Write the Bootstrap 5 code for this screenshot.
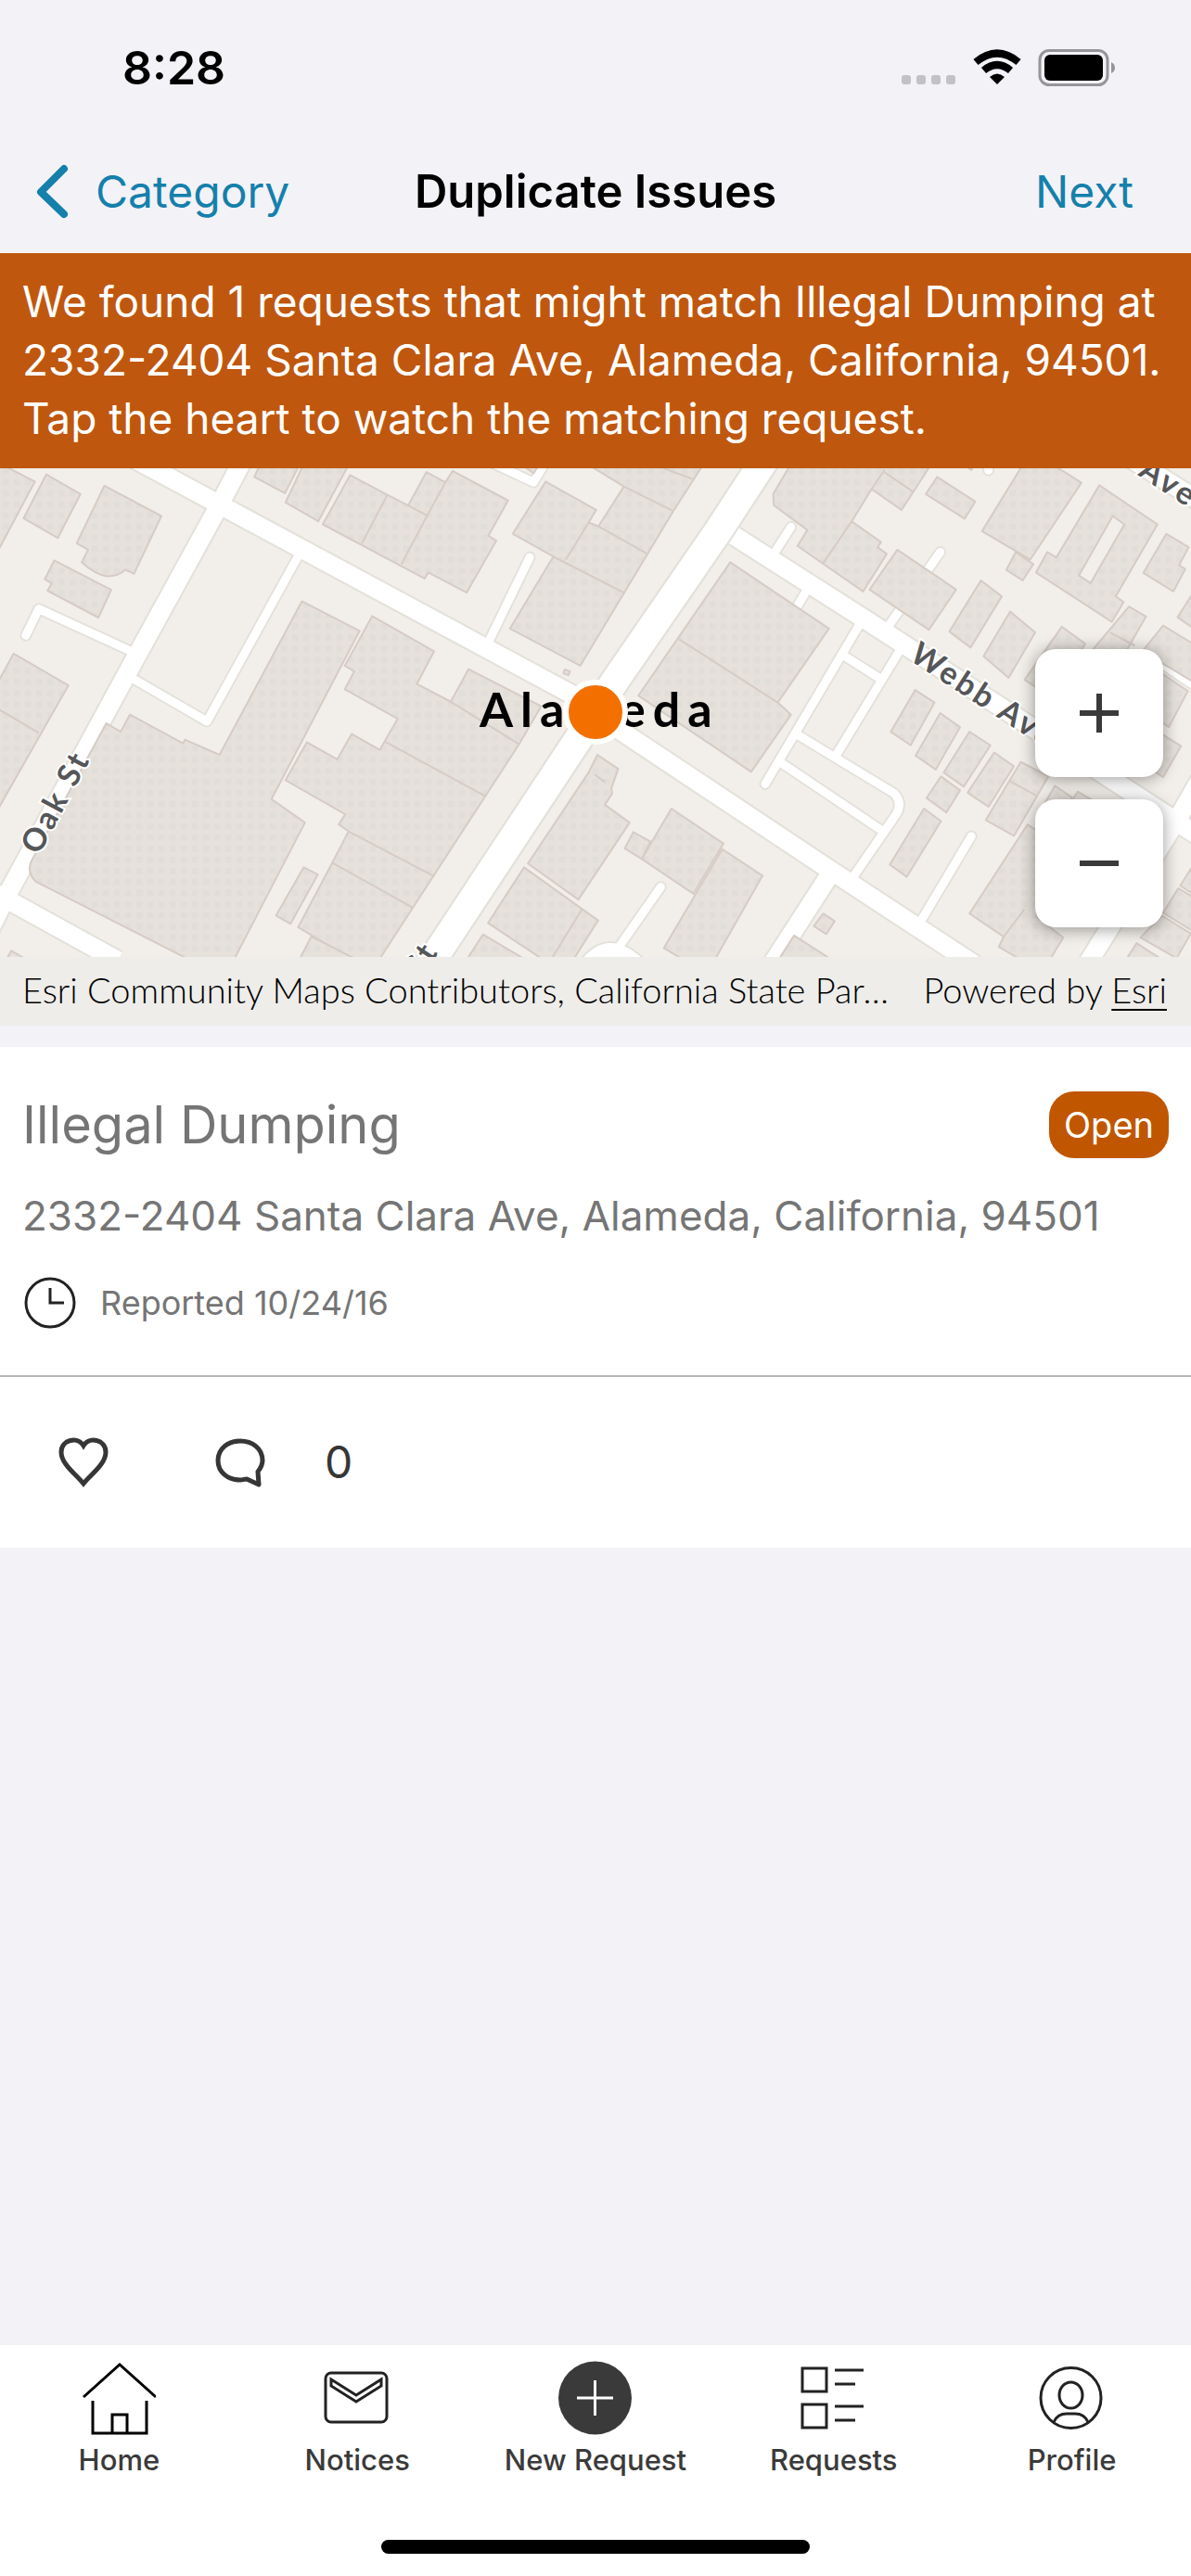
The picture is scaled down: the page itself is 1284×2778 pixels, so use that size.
<!DOCTYPE html>
<html lang="en">
<head>
<meta charset="utf-8">
<meta name="viewport" content="width=device-width, initial-scale=1">
<title>Duplicate Issues</title>
<link href="https://cdn.jsdelivr.net/npm/bootstrap@5.3.0/dist/css/bootstrap.min.css" rel="stylesheet">
<style>
  body { background: #f3f2f7; font-family: Inter, "Liberation Sans", sans-serif; color: #000; }
  svg { display: block; flex: none; }
  a { text-decoration: none; }

  .status-bar { height: 141px; padding: 4px 82px 0 132px; }
  .clock-time { font-size: 50px; line-height: 60px; font-weight: 600; }

  .nav-top { height: 132px; font-size: 48px; line-height: 60px; }
  .nav-top a { color: #1480ab; }
  .nav-top h1 { font-size: 49px; line-height: 60px; font-weight: 600; }
  .nav-side { flex: 1 1 0; }
  .nav-back { padding: 0 24px 0 38px; gap: 25px; }
  .nav-next { padding-right: 62px; }

  .notice { background: #c0570e; color: #fff; font-size: 46px; line-height: 63px; padding: 21px 20px 22px 24px; }

  .map-box { background: #f2efea; }
  .map-art { width: 100%; height: 601px; }
  .land-build { fill: url(#dots); stroke: #d6ccc5; stroke-width: 5; stroke-linejoin: round; }
  .land-line { fill: none; stroke: #d6ccc5; stroke-width: 5; }
  .casing { stroke: #e3e1da; }
  .lane { stroke: #fff; }
  .map-label { font-family: Lato, "Liberation Sans", sans-serif; font-weight: 700; paint-order: stroke; }
  .zoom-stack { right: 30px; top: 195px; gap: 24px; }
  .zoom-btn { width: 138px; height: 138px; border: 0; border-radius: 22px; background: #fff; box-shadow: 0 2px 18px rgba(0, 0, 0, .4); }
  .map-credit { height: 74px; padding: 0 26px 4px 24px; background: #eeedea; font-family: Lato, "Liberation Sans", sans-serif; font-size: 38px; font-weight: 300; line-height: 44px; }
  .map-credit a { color: #000; text-decoration: underline; text-underline-offset: 6px; text-decoration-thickness: 2px; }

  .issue { margin-top: 23px; background: #fff; color: #757575; }
  .issue-main { padding: 48px 24px 50px 24px; border-bottom: 2px solid #b6b6b6; }
  .issue h2 { font-size: 56px; line-height: 72px; font-weight: 400; }
  .state-pill { background: #c05600; color: #fff; font-size: 38px; line-height: 72px; border-radius: 27px; padding: 0 16px; }
  .issue-place { font-size: 44px; line-height: 56px; margin-top: 34px; }
  .issue-date { font-size: 36px; line-height: 56px; margin-top: 38px; gap: 26px; }
  .issue-tools { height: 184px; padding: 0 62px; color: #363636; font-size: 48px; gap: 114px; }
  .tool-btn { border: 0; background: none; padding: 0; color: inherit; gap: 64px; }

  .tabs-bottom { background: #fff; padding: 17px 0 24px; }
  .tabs-bottom a { color: #3a3a3a; font-size: 31px; line-height: 36px; font-weight: 500; gap: 9px; }
  .home-bar { width: 36%; height: 15px; border-radius: 8px; background: #000; margin-top: 68px; }
</style>
<script src="https://cdn.jsdelivr.net/npm/bootstrap@5.3.0/dist/js/bootstrap.bundle.min.js" defer></script>
</head>
<body class="d-flex flex-column min-vh-100">

<header>
  <div class="status-bar d-flex align-items-center justify-content-between">
    <span class="clock-time">8:28</span>
    <svg width="230" height="40" viewBox="0 0 230 40" aria-hidden="true">
      <g fill="#c2c1c6"><rect x="0" y="28" width="10" height="10" rx="3"/><rect x="16" y="28" width="10" height="10" rx="3"/><rect x="32" y="28" width="10" height="10" rx="3"/><rect x="48" y="28" width="10" height="10" rx="3"/></g>
      <g fill="none" stroke="#000" stroke-width="8"><path d="M80 14 Q103 -5 126 14"/><path d="M88.500 23 Q103 11 117.500 23"/></g>
      <path d="M103 38 L95 30 Q103 23 111 30 Z"/>
      <rect x="149" y="1.500" width="73" height="37" rx="10" fill="none" stroke="#96959a" stroke-width="3"/>
      <rect x="154" y="6" width="63" height="28" rx="6"/>
      <path d="M226 14 Q230 16 230 20 Q230 24 226 26 Z" fill="#96959a"/>
    </svg>
  </div>
  <nav class="nav-top d-flex align-items-center" aria-label="Page">
    <a href="#" class="nav-side nav-back d-flex align-items-center">
      <svg width="40" height="60" viewBox="0 0 40 60" fill="none" stroke="#1480ab" stroke-width="8" stroke-linecap="round" stroke-linejoin="round" aria-hidden="true"><path d="M31 5 L6 30 L31 54"/></svg>
      <span>Category</span>
    </a>
    <h1 class="m-0">Duplicate Issues</h1>
    <a href="#" class="nav-side nav-next text-end">Next</a>
  </nav>
</header>

<main class="flex-grow-1">
  <p class="notice m-0">We found 1 requests that might match Illegal Dumping at 2332-2404 Santa Clara Ave, Alameda, California, 94501. Tap the heart to watch the matching request.</p>

  <section class="map-box position-relative overflow-hidden" aria-label="Map">
    <svg class="map-art position-absolute top-0 start-0" viewBox="0 0 1284 601" preserveAspectRatio="xMidYMid slice" aria-hidden="true">
      <defs>
        <pattern id="dots" width="29.300" height="29.300" patternUnits="userSpaceOnUse">
          <rect width="30" height="30" fill="#e6e1db"/><rect x="7" y="7" width="16" height="16" rx="3" fill="#e1ddd8"/>
        </pattern>
        <g id="big-roads" fill="none" stroke-linejoin="round">
          <path d="M350 10 L1540 652 L1620 720 L2168 1085 L2568 1348"/>
          <path d="M645 5 L573 143 L350 550 L20 1160 L-40 1280"/>
          <path d="M-40 1143 L10 1170 L310 1336"/>
          <path d="M1933 215 L2258 423 L2728 727 L3160 1010"/>
          <path d="M2188 1105 L2030 1350"/>
          <path d="M2860 1350 L3108 950 L3160 860"/>
          <path d="M2960 0 L3180 138"/>
        </g>
        <path id="main-road" fill="none" d="M1120 1363 L1525 748 L1618 600 L1893 200 L2030 -10"/>
        <g id="lanes" fill="none" stroke-linecap="round" stroke-linejoin="round">
          <path d="M790 260 L545 705 L350 592"/>
          <path d="M68 478 L102 408 L350 522"/>
          <path d="M1395 272 L1284 500"/>
          <path d="M1290 20 L1405 74 L1440 15"/>
          <path d="M2083 192 L2030 275"/><path d="M2476 258 L2335 460"/><path d="M2130 350 L2100 400"/><path d="M2603 20 L2603 42"/>
          <path d="M2263 450 L2015 870"/><path d="M2220 530 L2318 592"/><path d="M2380 500 L2203 792"/>
          <path d="M2100 740 L2355 895 Q2378 920 2360 950 L2240 1125"/>
          <path d="M2058 815 L2318 990"/><path d="M2558 1008 L2420 1240"/><path d="M1740 1142 L1630 1300"/>
          <path d="M3040 540 L3160 620"/>
        </g>
      </defs>
      <g transform="scale(.4094 .4087) translate(0 -37)">
        <use href="#lanes" class="casing" stroke-width="31"/>
        <use href="#big-roads" class="casing" stroke-width="58"/>
        <use href="#main-road" class="casing" stroke-width="84"/>
        <path d="M1520 1345 Q1600 1230 1710 1345" fill="#fff" stroke="#e3e1da" stroke-width="5"/>
        <use href="#lanes" class="lane" stroke-width="22"/>
        <use href="#big-roads" class="lane" stroke-width="48"/>
        <use href="#main-road" class="lane" stroke-width="73"/>
        <g class="land-build">
          <path d="M-10 20 L0 30 L20 35 L92 72 L0 245 L-10 255Z"/>
          <path d="M122 53 L212 105 L152 221 L62 169Z"/>
          <path d="M275 83 L425 163 L353 315 L330 305 Q312 322 282 322 Q250 318 215 285 L232 252 L202 235Z"/>
          <path d="M143 280 L293 358 L259 431 L125 360 L136 341 L118 330Z"/>
          <path d="M-10 610 L36 526 L180 610 L-10 945Z"/>
          <path d="M795 388 L947 466 L715 910 L803 972 L600 1365 L560 1365 L95 1128 Q70 1105 82 1075 L280 710 L318 732 L342 687 L482 763 L487 753 L578 793Z"/>
          <path d="M980 427 L1143 520 L1098 606 L1187 653 L1234 567 L1425 665 L1367 765 L978 1365 L785 1248 L875 1078 L918 995 L892 977 L909 950 L752 860 L808 760 L888 805 L926 738 L1000 780 L1047 698 L908 620 L933 573 L908 558Z"/>
          <path d="M820 1272 L1000 1365 L772 1365Z"/>
          <path d="M800 1090 L837 1109 L765 1239 L727 1217Z"/>
          <path d="M690 15 L670 60 L750 103 L795 15Z"/>
          <path d="M805 15 L752 127 L838 177 L925 15Z"/>
          <path d="M922 55 L1020 107 L1075 135 L1123 47 L1173 74 L1192 44 L1338 122 L1286 215 L1307 228 L1229 365 L1128 312 L1118 328 L850 185Z"/>
          <path d="M1437 72 L1570 147 L1550 180 L1576 190 L1643 85 L1540 22 L1855 22 L1773 150 L1528 558 L1343 460 L1457 270 L1350 210Z"/>
          <path d="M1487 568 L1501 573 L1497 583 L1484 578Z"/>
          <path d="M1573 793 L1628 830 L1610 880 L1612 895 L1593 925 L1658 972 L1523 1175 L1390 1080 L1550 840Z"/>
          <path d="M1380 1090 L1575 1230 L1490 1365 L1455 1350 L1285 1237Z"/>
          <path d="M1272 1267 L1420 1355 L1215 1355Z"/><path d="M30 1310 L90 1345 L10 1345Z"/>
          <path d="M1370 25 L1405 50 L1425 20Z"/>
        </g>
        <g class="land-line">
          <path d="M0 675 L102 735 M1187 653 L1367 765 M1013 758 L1278 902 M918 995 L1140 1112 M875 1078 L1086 1196"/>
          <path d="M1020 107 L953 235 M1075 135 L1125 162 M1173 74 L1125 162 L1057 290 M1550 180 L1490 278 M1457 270 L1643 365 M1576 190 L1703 262 M1643 85 L1773 150 M1748 37 L1823 65 M1533 1200 L1450 1335 M1566 845 L1593 865"/>
        </g>
        <g transform="translate(1568 0)">
          <g class="land-build">
            <path d="M355 285 L615 460 L480 655 L515 687 L410 838 L113 637Z"/>
            <path d="M515 25 L468 105 L470 135 L558 200 L532 242 L705 362 L767 263 L743 245 L752 232 L675 177 L727 92 L806 147 L885 25Z"/>
            <path d="M900 60 L1000 125 L972 170 L870 105Z"/><path d="M960 20 L990 42 L1000 20Z"/>
            <path d="M795 252 L950 357 L878 463 L722 357Z"/>
            <path d="M1015 333 L1070 375 L988 510 L932 468Z"/>
            <path d="M1092 415 L1158 470 L1088 590 L1022 533Z"/>
            <path d="M1228 455 L1290 500 L1200 640 L1130 595Z"/>
            <path d="M1130 20 L1200 25 L1280 75 L1145 278 L1018 203Z"/>
            <path d="M1107 258 L1153 290 L1125 333 L1082 305Z"/>
            <path fill-rule="evenodd" d="M1327 82 L1480 185 L1370 375 L1391 390 L1360 442 L1160 312 L1190 258 L1214 272Z M1362 163 L1393 185 L1304 340 L1273 320Z"/>
            <path d="M1503 210 L1562 245 L1537 293 L1553 303 L1522 362 L1443 313Z"/>
            <path d="M1405 402 L1450 428 L1380 550 L1310 515Z"/>
            <path d="M1590 340 L1533 430 L1590 470Z"/>
            <path d="M1495 452 L1590 510 L1590 610 L1440 520Z"/>
            <path d="M1480 570 L1560 625 L1510 720 L1400 640Z"/><path d="M1470 725 L1542 770 L1495 852 L1420 800Z"/>
            <path d="M842 622 L893 655 L830 768 L778 732Z"/><path d="M908 683 L960 720 L896 832 L843 795Z"/>
            <path d="M985 732 L1040 768 L970 877 L917 840Z"/><path d="M1050 787 L1102 823 L1035 930 L980 893Z"/>
            <path d="M910 850 L960 887 L924 945 L872 907Z"/><path d="M1120 812 L1193 850 L1102 1007 L1028 965Z"/>
            <path d="M865 935 L910 968 L820 1115 L775 1083Z"/>
            <path d="M1210 875 L1255 905 L1200 985 L1160 960Z"/><path d="M1270 890 L1320 920 L1270 1000 L1220 970Z"/>
            <path d="M1138 977 L1260 1060 L1160 1220 L1232 1275 L1190 1345 L1140 1345 L1062 1300 L1075 1273 L985 1212Z"/>
            <path d="M100 997 L145 1022 L122 1068 L77 1040Z"/>
            <path d="M200 935 L337 1027 L258 1160 L122 1068Z"/>
            <path d="M334 1042 L440 1112 L308 1345 L250 1345 L180 1303Z"/>
            <path d="M600 1212 L630 1232 L608 1266 L575 1245Z"/><path d="M523 1270 L640 1345 L475 1345Z"/>
            <path d="M1535 1145 L1600 1185 L1600 1275 L1495 1210Z"/><path d="M1492 1218 L1568 1265 L1530 1330 L1435 1275Z"/>
            <path d="M1425 1290 L1510 1345 L1390 1345Z"/><path d="M1580 1075 L1540 1138 L1580 1165Z"/>
          </g>
          <path class="land-line" d="M220 488 L480 655 M675 177 L600 287 M762 40 L727 92 M757 45 L835 98 M1090 862 L1160 900 M1130 1200 L1075 1273 M1355 470 L1420 505"/>
        </g>
      </g>
      <g class="map-label" fill="#555658" stroke="#fff" stroke-width="4" font-size="34" letter-spacing="3">
        <text transform="translate(42 418) rotate(-62)">Oak St</text>
        <text transform="translate(979 206) rotate(33)">Webb Ave</text>
        <text transform="translate(1226 7) rotate(33)">Ave</text>
        <text transform="translate(404 628) rotate(-57)">Park St</text>
      </g>
      <text class="map-label" x="517" y="279" font-size="52" letter-spacing="8">Alameda</text>
      <circle cx="642" cy="263" r="32" fill="#f37000" stroke="#fff" stroke-width="6"/>
    </svg>
    <div class="map-art d-flex flex-column justify-content-end">
      <div class="map-credit position-relative d-flex align-items-center justify-content-between text-nowrap text-black">
        <span>Esri Community Maps Contributors, California State Par…</span>
        <span>Powered by <a href="#">Esri</a></span>
      </div>
    </div>
    <div class="zoom-stack position-absolute d-flex flex-column">
      <button type="button" class="zoom-btn d-flex align-items-center justify-content-center" aria-label="Zoom in"><svg width="42" height="42" viewBox="0 0 42 42" stroke="#3a3a3a" stroke-width="6" aria-hidden="true"><path d="M0 21 H42 M21 0 V42"/></svg></button>
      <button type="button" class="zoom-btn d-flex align-items-center justify-content-center" aria-label="Zoom out"><svg width="42" height="42" viewBox="0 0 42 42" stroke="#3a3a3a" stroke-width="6" aria-hidden="true"><path d="M0 21 H42"/></svg></button>
    </div>
  </section>

  <article class="issue">
    <div class="issue-main">
      <div class="d-flex align-items-center justify-content-between">
        <h2 class="m-0">Illegal Dumping</h2>
        <span class="state-pill">Open</span>
      </div>
      <p class="issue-place mb-0">2332-2404 Santa Clara Ave, Alameda, California, 94501</p>
      <div class="issue-date d-flex align-items-center">
        <svg width="58" height="56" viewBox="-2 0 58 56" fill="none" stroke="#222" stroke-width="3" aria-hidden="true"><circle cx="28" cy="28" r="26"/><path d="M28 12 V28 H43"/></svg>
        <span>Reported 10/24/16</span>
      </div>
    </div>
    <div class="issue-tools d-flex align-items-center">
      <button type="button" class="tool-btn" aria-label="Watch request"><svg width="56" height="54" viewBox="0 0 56 54" fill="none" stroke="#363636" stroke-width="5" aria-hidden="true"><path d="M28 50 C20 40 4 29 4 16 C4 2 22 -1 28 9 C34 -1 52 2 52 16 C52 29 36 40 28 50 Z"/></svg></button>
      <button type="button" class="tool-btn d-flex align-items-center" aria-label="Comments: 0"><svg width="54" height="54" viewBox="0 0 54 54" fill="none" stroke="#363636" stroke-width="5" stroke-linejoin="round" aria-hidden="true"><path d="M46 37 C50 32 51 28 51 25 C51 12 40 4 27 4 C14 4 3 12 3 25 C3 38 14 46 27 46 C30 46 32 45 34 45 L47 51 Z"/></svg><span>0</span></button>
    </div>
  </article>
</main>

<footer class="tabs-bottom">
  <nav class="row row-cols-5 g-0" aria-label="Sections">
    <a href="#" class="col d-flex flex-column align-items-center">
      <svg width="80" height="80" viewBox="0 0 80 80" fill="none" stroke="#000" stroke-width="3" aria-hidden="true"><path d="M2 39 L41 4 L80 39"/><path d="M12 43 V78 H70 V43"/><path d="M33 78 V58 H49 V78"/></svg>
      Home</a>
    <a href="#" class="col d-flex flex-column align-items-center">
      <svg width="80" height="80" viewBox="0 0 80 80" fill="none" stroke="#222" stroke-width="3" aria-hidden="true"><rect x="6" y="13" width="66" height="53" rx="6"/><path d="M12 20 L39 37 L66 20 V27 L39 44 L12 27 Z"/></svg>
      Notices</a>
    <a href="#" class="col d-flex flex-column align-items-center text-nowrap">
      <svg width="80" height="80" viewBox="0 0 80 80" aria-hidden="true"><circle cx="39.500" cy="40" r="39.500" fill="#3a3a3a"/><path d="M20 40 H59 M39.500 21 V59" stroke="#fff" stroke-width="3"/></svg>
      New Request</a>
    <a href="#" class="col d-flex flex-column align-items-center">
      <svg width="80" height="80" viewBox="0 0 80 80" fill="none" stroke="#222" stroke-width="3" aria-hidden="true"><path d="M6 8 H32 V33 H6 Z M6 47 H32 V72 H6 Z M41 10 H72 M41 25 H63 M41 49 H72 M41 64 H63"/></svg>
      Requests</a>
    <a href="#" class="col d-flex flex-column align-items-center">
      <svg width="80" height="80" viewBox="0 0 80 80" fill="none" stroke="#222" stroke-width="3" aria-hidden="true"><circle cx="38.500" cy="40" r="32.500"/><ellipse cx="38.500" cy="37" rx="12.500" ry="14"/><path d="M20 66 Q24 57 34 57 H43 Q53 57 57 66"/></svg>
      Profile</a>
  </nav>
  <div class="home-bar mx-auto"></div>
</footer>
</body>
</html>
